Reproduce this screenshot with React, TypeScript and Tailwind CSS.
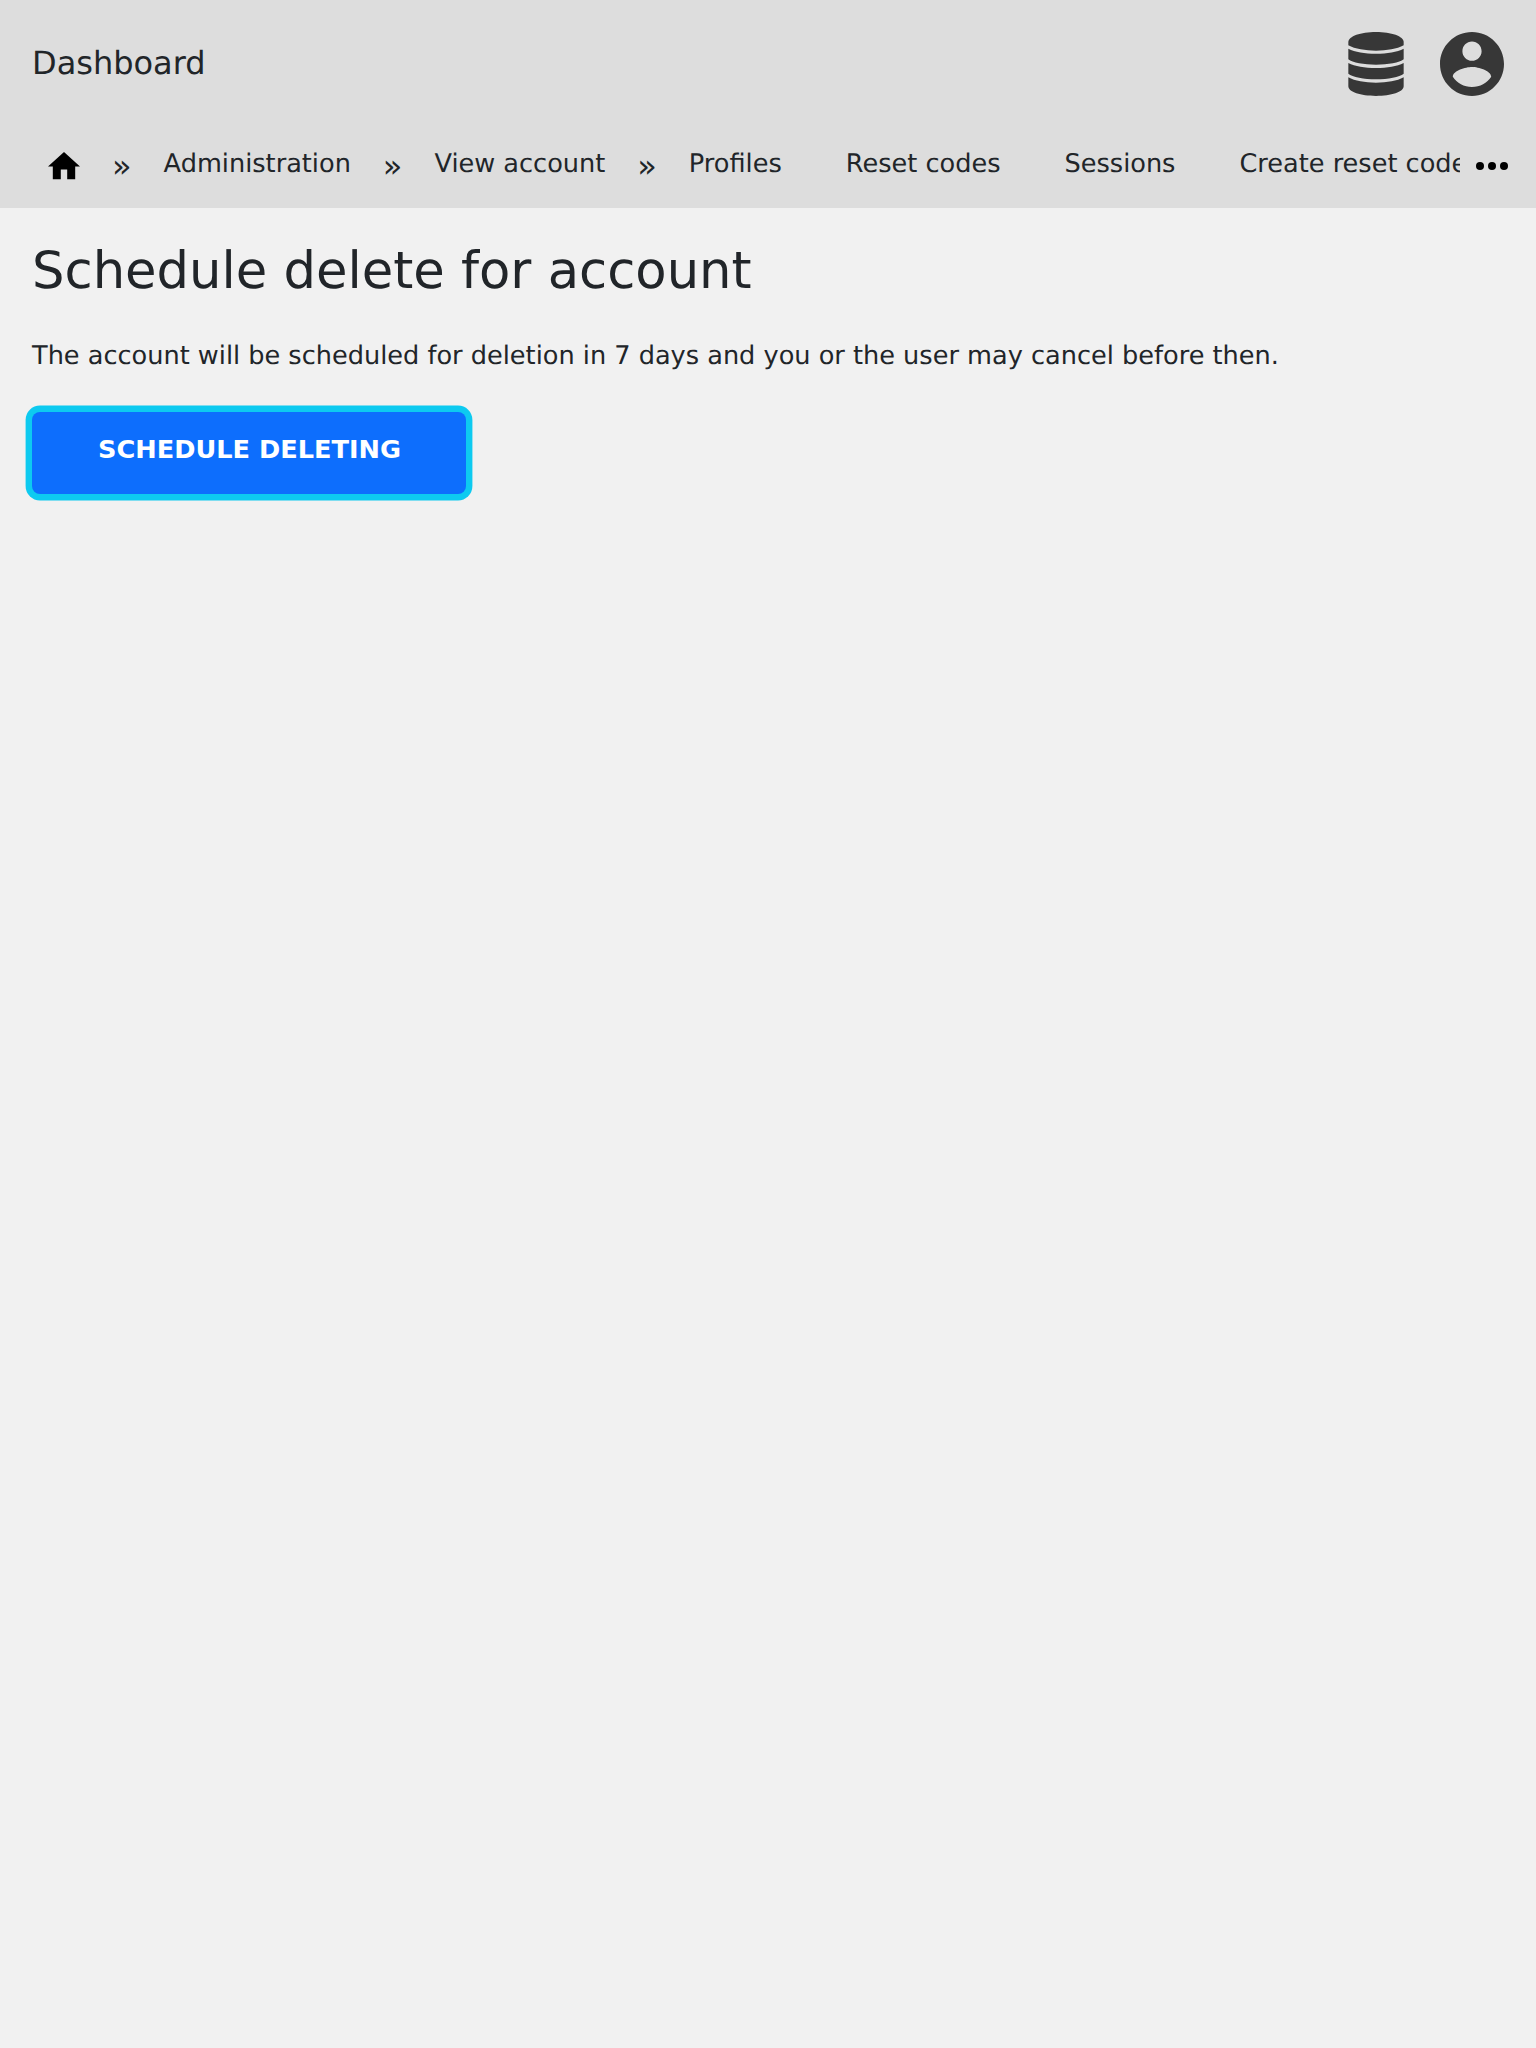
const links = ['Profiles', 'Reset codes', 'Sessions', 'Create reset code'];

function DatabaseIcon() {
  return (
    <svg className="h-16 w-[56px]" viewBox="0 0 168 192" fill="currentColor">
      <path d="M1 30C1 13 38 0 84 0s83 13 83 30v10C147 51 116 56 84 56S21 51 1 40z" />
      <path d="M1 50C21 60 50 65 84 65s63-5 83-15v32C155 92 120 98 84 98S13 92 1 82z" />
      <path d="M1 93c20 10 49 15 83 15s63-5 83-15v32c-12 10-47 17-83 17S13 135 1 125z" />
      <path d="M1 136c20 11 49 16 83 16s63-5 83-16v27c0 17-37 29-83 29S1 180 1 163z" />
    </svg>
  );
}

function AccountIcon() {
  return (
    <svg className="size-16" viewBox="2 2 20 20" fill="currentColor">
      <path d="M12 2C6.48 2 2 6.48 2 12s4.48 10 10 10 10-4.48 10-10S17.52 2 12 2zm0 3c1.66 0 3 1.34 3 3s-1.34 3-3 3-3-1.34-3-3 1.34-3 3-3zm0 14.2c-2.5 0-4.71-1.28-6-3.22.03-1.99 4-3.08 6-3.08 1.99 0 5.97 1.09 6 3.08-1.29 1.94-3.5 3.22-6 3.22z" />
    </svg>
  );
}

function Separator() {
  return <span className="shrink-0 text-[32px] leading-[44px]">»</span>;
}

function Crumb({ label }: { label: string }) {
  return (
    <a href="#" className="shrink-0 px-8 pt-px text-[25.6px] leading-[38px] whitespace-nowrap">
      {label}
    </a>
  );
}

export default function App() {
  return (
    <div className="min-h-[2048px] bg-[#f1f1f1] font-['DejaVu_Sans',sans-serif] text-[#212529] [text-rendering:geometricPrecision]">
      <header className="h-[208px] bg-[#dddddd]">
        <div className="flex h-32 items-center justify-between px-8">
          <span className="pb-0.5 text-[32px] leading-[48px]">Dashboard</span>
          <div className="flex items-center gap-9 text-[#373737]">
            <DatabaseIcon />
            <AccountIcon />
          </div>
        </div>
        <nav className="flex h-20 pt-4">
          <div className="flex w-[1460px] items-start overflow-hidden pl-4">
            <a href="#" className="shrink-0 px-8 pt-[8.4px] text-black" aria-label="Home">
              <svg className="h-[27.2px] w-8" viewBox="2 3 20 17" fill="currentColor">
                <path d="M10 20v-6h4v6h5v-8h3L12 3 2 12h3v8z" />
              </svg>
            </a>
            <Separator />
            <Crumb label="Administration" />
            <Separator />
            <Crumb label="View account" />
            <Separator />
            {links.map((label) => (
              <Crumb key={label} label={label} />
            ))}
          </div>
          <button className="flex h-11 w-[76px] items-center pl-4 text-black" aria-label="More">
            <svg className="h-2 w-8" viewBox="4 10 16 4" fill="currentColor">
              <circle cx="6" cy="12" r="2" />
              <circle cx="12" cy="12" r="2" />
              <circle cx="18" cy="12" r="2" />
            </svg>
          </button>
        </nav>
      </header>
      <main className="flex flex-col items-start px-8 pt-[33px]">
        <h1 className="text-[51.2px] leading-[61px]">Schedule delete for account</h1>
        <p className="mt-[35px] text-[25.6px] leading-[38px]">
          The account will be scheduled for deletion in 7 days and you or the user may cancel before then.
        </p>
        <button className="mt-[37px] h-[82px] w-[434px] rounded-lg bg-[#0d6efd] pb-2 pl-px text-[25.6px] leading-[38px] font-bold text-white uppercase shadow-[0_0_0_6.4px_#0dcaf0]">
          Schedule deleting
        </button>
      </main>
    </div>
  );
}
